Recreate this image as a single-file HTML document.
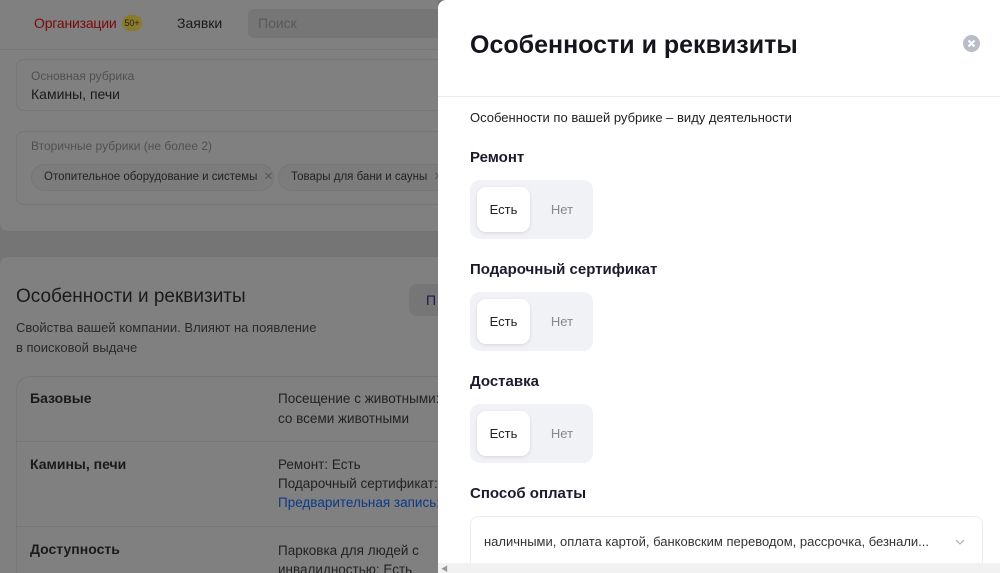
<!DOCTYPE html>
<html><head><meta charset="utf-8"><style>
*{box-sizing:border-box;margin:0;padding:0}
body{width:1000px;height:573px;overflow:hidden;position:relative;background:#757575;font-family:"Liberation Sans","Noto Sans CJK JP",sans-serif;color:#1a1a1a}
.bg{position:absolute;left:0;top:0;width:438px;height:573px;overflow:hidden}
.top{position:absolute;left:0;top:0;width:460px;height:231px;background:#808080;border-radius:0 0 8px 8px}
.hdr{position:absolute;left:0;top:0;width:460px;height:50px;border-bottom:1px solid #767676}
.card2{position:absolute;left:0;top:257px;width:460px;height:330px;background:#808080;border-radius:8px}
.t{position:absolute;white-space:nowrap}
.box{position:absolute;border:1px solid #767676;border-radius:8px}
.chip{position:absolute;height:27px;border:1px solid #767676;border-radius:14px;font-size:11.5px;color:#222;line-height:25px;padding-left:12px;background:#7c7c7c;white-space:nowrap;overflow:hidden}
.panel{position:absolute;left:438px;top:0;width:562px;height:573px;background:#fff;border-radius:8px 0 0 0;overflow:hidden}
.seg{position:absolute;left:32px;width:123px;height:59px;background:#f1f2f6;border-radius:10px}
.seg .on{position:absolute;left:7px;top:7px;width:53px;height:45px;background:#fff;border-radius:9px;box-shadow:0 1px 3px rgba(0,0,0,.12);font-size:13px;color:#222;text-align:center;line-height:45px}
.seg .off{position:absolute;left:72px;top:7px;width:40px;height:45px;font-size:13px;color:#888;text-align:center;line-height:45px}
.lbl{position:absolute;left:32px;font-size:15px;font-weight:bold;color:#1b1b2e}
</style></head><body>
<div class="bg">
 <div class="top"></div>
 <div class="hdr"></div>
 <div class="t" style="left:34px;top:15px;font-size:14px;color:#7a0a0a;letter-spacing:-0.2px">Организации</div>
 <div class="t" style="left:122px;top:15px;width:20px;height:16px;border-radius:8px;background:#8a7a2c;font-size:9px;line-height:16px;text-align:center;color:#222">50+</div>
 <div class="t" style="left:177px;top:15px;font-size:14px;color:#1a1a1a">Заявки</div>
 <div class="t" style="left:248px;top:9px;width:200px;height:29px;background:#767676;border-radius:6px;font-size:14px;color:#5a5a5a;padding:6px 10px">Поиск</div>
 <div class="box" style="left:16px;top:59px;width:440px;height:52px"></div>
 <div class="t" style="left:31px;top:69px;font-size:12px;color:#505050">Основная рубрика</div>
 <div class="t" style="left:31px;top:86px;font-size:14px;color:#1a1a1a">Камины, печи</div>
 <div class="box" style="left:16px;top:131px;width:440px;height:74px"></div>
 <div class="t" style="left:31px;top:139px;font-size:12px;color:#505050">Вторичные рубрики (не более 2)</div>
 <div class="chip" style="left:31px;top:164px;width:243px">Отопительное оборудование и системы <span style="color:#555;margin-left:3px">✕</span></div>
 <div class="chip" style="left:278px;top:164px;width:180px">Товары для бани и сауны <span style="color:#555;margin-left:3px">✕</span></div>
 <div class="card2"></div>
 <div class="t" style="left:16px;top:286px;font-size:19px;color:#1a1a1a">Особенности и реквизиты</div>
 <div class="t" style="left:409px;top:284px;width:60px;height:32px;background:#767676;border-radius:8px;font-size:14px;color:#1a1a4a;padding:8px 17px">П</div>
 <div class="t" style="left:16px;top:318px;font-size:13px;color:#2a2a2a;line-height:20px">Свойства вашей компании. Влияют на появление<br>в поисковой выдаче</div>
 <div class="box" style="left:16px;top:376px;width:460px;height:220px;border-radius:14px"></div>
 <div class="t" style="left:17px;top:441px;width:440px;border-top:1px solid #767676"></div>
 <div class="t" style="left:17px;top:526px;width:440px;border-top:1px solid #767676"></div>
 <div class="t" style="left:30px;top:390px;font-size:14px;font-weight:bold">Базовые</div>
 <div class="t" style="left:278px;top:389px;font-size:13.5px;line-height:20px;color:#222">Посещение с животными:<br>со всеми животными</div>
 <div class="t" style="left:30px;top:456px;font-size:14px;font-weight:bold">Камины, печи</div>
 <div class="t" style="left:278px;top:455px;font-size:13.5px;line-height:19px;color:#222">Ремонт: Есть<br>Подарочный сертификат:<br><span style="color:#0b3a8a">Предварительная запись:</span></div>
 <div class="t" style="left:30px;top:541px;font-size:14px;font-weight:bold">Доступность</div>
 <div class="t" style="left:278px;top:541px;font-size:13.5px;line-height:19px;color:#222">Парковка для людей с<br>инвалидностью: Есть</div>
</div>
<div class="panel">
 <div class="t" style="left:32px;top:31px;font-size:25px;font-weight:bold;color:#15151f">Особенности и реквизиты</div>
 <svg class="t" style="left:525px;top:35px" width="17" height="17" viewBox="0 0 17 17"><circle cx="8.5" cy="8.5" r="8.5" fill="#b9bdc9"/><path d="M5.5 5.5l6 6M11.5 5.5l-6 6" stroke="#fff" stroke-width="2"/></svg>
 <div class="t" style="left:0;top:96px;width:562px;border-top:1px solid #ececec"></div>
 <div class="t" style="left:32px;top:110px;font-size:13px;color:#222">Особенности по вашей рубрике – виду деятельности</div>
 <div class="lbl" style="top:149px">Ремонт</div>
 <div class="seg" style="top:180px"><div class="on">Есть</div><div class="off">Нет</div></div>
 <div class="lbl" style="top:261px">Подарочный сертификат</div>
 <div class="seg" style="top:292px"><div class="on">Есть</div><div class="off">Нет</div></div>
 <div class="lbl" style="top:373px">Доставка</div>
 <div class="seg" style="top:404px"><div class="on">Есть</div><div class="off">Нет</div></div>
 <div class="lbl" style="top:485px">Способ оплаты</div>
 <div class="t" style="left:32px;top:516px;width:513px;height:60px;border:1px solid #ececf0;border-radius:8px"></div>
 <div class="t" style="left:46px;top:534px;font-size:13px;color:#333">наличными, оплата картой, банковским переводом, рассрочка, безнали...</div>
 <svg class="t" style="left:517px;top:539px" width="10" height="6" viewBox="0 0 10 6"><path d="M1 1l4 4 4-4" stroke="#aaa" fill="none" stroke-width="1"/></svg>
 <div class="t" style="left:0;top:563px;width:562px;height:10px;background:#f1f1f1"></div>
 <div class="t" style="left:3px;top:564px;font-size:7px;color:#999">◀</div>
</div>
</body></html>
